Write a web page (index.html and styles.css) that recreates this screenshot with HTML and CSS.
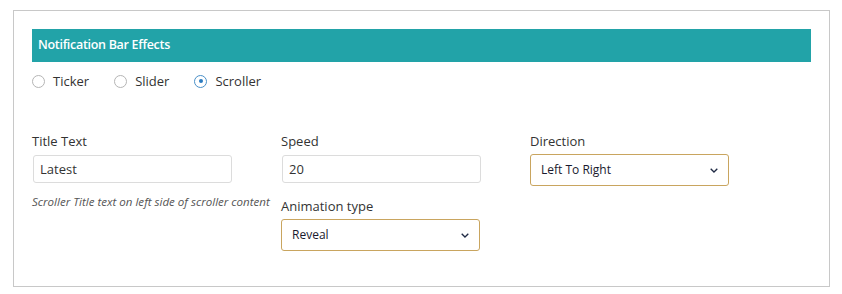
FILE: index.html
```html
<!DOCTYPE html>
<html>
<head>
<meta charset="utf-8">
<link rel="stylesheet" href="styles.css">
</head>
<body>
<div class="panel">
  <div class="bar">Notification Bar Effects</div>
  <div class="radios">
    <label class="radio"><span class="dot"></span>Ticker</label>
    <label class="radio"><span class="dot"></span>Slider</label>
    <label class="radio"><span class="dot on"></span>Scroller</label>
  </div>
  <div class="grid">
    <div class="col">
      <div class="lbl">Title Text</div>
      <div class="input">Latest</div>
      <div class="help">Scroller Title text on left side of scroller content</div>
    </div>
    <div class="col">
      <div class="lbl">Speed</div>
      <div class="input">20</div>
      <div class="lbl lbl2">Animation type</div>
      <div class="select">Reveal<svg class="chev" viewBox="0 0 8 5" width="8" height="5"><path d="M0.7 0.7 L4 4 L7.3 0.7" fill="none" stroke="#1f2a44" stroke-width="1.3"/></svg></div>
    </div>
    <div class="col">
      <div class="lbl">Direction</div>
      <div class="select sel-dir">Left To Right<svg class="chev" viewBox="0 0 8 5" width="8" height="5"><path d="M0.7 0.7 L4 4 L7.3 0.7" fill="none" stroke="#1f2a44" stroke-width="1.3"/></svg></div>
    </div>
  </div>
</div>
</body>
</html>
```
FILE: styles.css
```css
* { box-sizing: border-box; }
html, body { margin: 0; padding: 0; background: #fff; }
body {
  font-family: "Open Sans", "Liberation Sans", sans-serif;
  color: #333;
  padding: 10px 12px 0 13px;
}
.panel {
  width: 817px;
  height: 277px;
  border: 1px solid #c8c8c8;
  padding: 18px 18px 0 18px;
}
.bar {
  background: #22a3a8;
  color: #fff;
  font-weight: 600;
  font-size: 12.5px;
  height: 33px;
  line-height: 32px;
  padding-left: 6px;
  letter-spacing: -0.3px;
}
.radios {
  display: flex;
  height: 38px;
  align-items: center;
  font-size: 13px;
  color: #333;
}
.radio {
  display: flex;
  align-items: center;
  margin-right: 25px;
}
.dot {
  width: 13px;
  height: 13px;
  border: 1px solid #b5b5b5;
  border-radius: 50%;
  margin-right: 8px;
  position: relative;
  background: #fff;
}
.dot.on { border-color: #4a90c8; }
.dot.on::after {
  content: "";
  position: absolute;
  left: 3.5px; top: 3.5px;
  width: 4px; height: 4px;
  border-radius: 50%;
  background: #2b7bc0;
}
.grid {
  display: grid;
  grid-template-columns: 249px 249px 249px;
  margin-top: 32px;
}
.lbl {
  font-size: 13px;
  color: #333;
  line-height: 18px;
  height: 18px;
  margin-bottom: 5px;
}
.lbl2 { margin-top: 14px; margin-bottom: 4px; }
.input {
  width: 199px;
  height: 28px;
  margin-left: 1px;
  border: 1px solid #dcdcdc;
  border-radius: 3px;
  font-size: 13px;
  line-height: 26px;
  padding-left: 6px;
  color: #333;
}
.help {
  font-size: 11.55px;
  font-style: italic;
  color: #555;
  margin-top: 11px;
  white-space: nowrap;
}
.select {
  width: 199px;
  height: 32px;
  border: 1px solid #c9a55f;
  border-radius: 3px;
  font-size: 12px;
  line-height: 30px;
  padding-left: 10px;
  padding-right: 10px;
  color: #1a1a2e;
  display: flex;
  justify-content: space-between;
  align-items: center;
}
.sel-dir { margin-top: -1px; }
.chev { display: block; }
```
